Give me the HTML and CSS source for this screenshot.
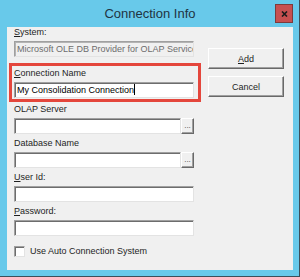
FILE: index.html
```html
<!DOCTYPE html>
<html lang="en">
<head>
    <meta charset="UTF-8">
    <meta name="viewport" content="width=device-width, initial-scale=1.0">
    <title>Connection Info</title>
    <link rel="stylesheet" href="styles.css">
</head>
<body>
    <div class="window">
        <div class="titlebar">
            <span class="title">Connection Info</span>
            <button class="close" title="Close">
                <svg width="7" height="6" viewBox="0 0 7 6">
                    <path d="M1 0.5 L6 5.5 M6 0.5 L1 5.5" stroke="#1a1a1a" stroke-width="1.6" fill="none"/>
                </svg>
            </button>
        </div>
        <div class="client">
            <div class="fields">
                <div class="field system">
                    <label><u>S</u>ystem:</label>
                    <div class="textbox disabled">Microsoft OLE DB Provider for OLAP Services</div>
                </div>
                <div class="field highlight">
                    <label><u>C</u>onnection Name</label>
                    <div class="textbox">My Consolidation Connection<span class="caret"></span></div>
                </div>
                <div class="field">
                    <label>OLAP Server</label>
                    <div class="browse-row">
                        <div class="textbox"></div>
                        <button class="browse">...</button>
                    </div>
                </div>
                <div class="field">
                    <label>Database Name</label>
                    <div class="browse-row">
                        <div class="textbox"></div>
                        <button class="browse">...</button>
                    </div>
                </div>
                <div class="field">
                    <label><u>U</u>ser Id:</label>
                    <div class="textbox"></div>
                </div>
                <div class="field">
                    <label><u>P</u>assword:</label>
                    <div class="textbox"></div>
                </div>
                <div class="check-row">
                    <span class="checkbox"></span>
                    <span>Use Auto Connection System</span>
                </div>
            </div>
            <div class="actions">
                <button class="btn"><u>A</u>dd</button>
                <button class="btn">Cancel</button>
            </div>
        </div>
    </div>
</body>
</html>
```

FILE: styles.css
```css
body {
    margin: 0;
    font-family: "Liberation Sans", Arial, sans-serif;
    font-size: 9px;
    color: #1e1e1e;
}

.window {
    width: 300px;
    height: 277px;
    box-sizing: border-box;
    background-color: #68c9ea;
    border-right: 1px solid #3c4e5a;
    border-bottom: 1px solid #3c4e5a;
    display: flex;
    flex-direction: column;
}

.titlebar {
    height: 27px;
    display: grid;
    grid-template-columns: 1fr auto 1fr;
    padding: 0 6px 0 7px;
}

.title {
    grid-column: 2;
    font-size: 13px;
    line-height: 27px;
    color: #1f3442;
}

.close {
    grid-column: 3;
    justify-self: end;
    align-self: start;
    margin-top: 4px;
    width: 18px;
    height: 19px;
    padding: 0;
    box-sizing: border-box;
    background-color: #c75050;
    border: 1px solid #7d3b3b;
    display: flex;
    align-items: center;
    justify-content: center;
}

.client {
    flex: 1;
    margin: 0 6px 6px 7px;
    padding: 0 9px 0 7px;
    background-color: #f0f0f0;
    display: flex;
}

.fields {
    width: 180px;
}

.field {
    margin-bottom: 4px;
}

.field label {
    display: block;
    line-height: 11px;
    margin-bottom: 3px;
}

.field.system {
    margin-bottom: 6px;
}

.field.highlight {
    border: 3px solid #e4463c;
    margin: 0 -7px 2px -5px;
    padding: 2px 4px 1px 2px;
}

.textbox {
    height: 16px;
    box-sizing: border-box;
    background-color: #fff;
    border: 1px solid;
    border-color: #a0a0a0 #e3e3e3 #e3e3e3 #a0a0a0;
    box-shadow: inset 1px 1px 0 #6d6d6d;
    padding: 0 2px;
    line-height: 14px;
    white-space: nowrap;
    overflow: hidden;
    color: #000;
}

.textbox.disabled {
    background-color: #f0f0f0;
    color: #6d6d6d;
    box-shadow: inset 1px 1px 0 #b4b4b4;
}

.caret {
    display: inline-block;
    width: 1px;
    height: 11px;
    background-color: #000;
    vertical-align: -2px;
}

.browse-row {
    display: flex;
}

.browse-row .textbox {
    flex: 1;
}

.browse {
    width: 13px;
    height: 16px;
    padding: 0;
    box-sizing: border-box;
    background-color: #f0f0f0;
    border: 1px solid;
    border-color: #fff #696969 #696969 #fff;
    box-shadow: inset -1px -1px 0 #a0a0a0;
    font-family: "Liberation Sans", Arial, sans-serif;
    font-size: 8px;
    line-height: 8px;
    color: #444;
    display: flex;
    align-items: flex-end;
    justify-content: center;
    padding-bottom: 3px;
}

.check-row {
    display: flex;
    align-items: center;
    gap: 5px;
    margin-top: 10px;
    line-height: 11px;
}

.checkbox {
    width: 11px;
    height: 11px;
    box-sizing: border-box;
    background-color: #fff;
    border: 1px solid;
    border-color: #a0a0a0 #e3e3e3 #e3e3e3 #a0a0a0;
    box-shadow: inset 1px 1px 0 #6d6d6d;
}

.actions {
    width: 76px;
    margin-left: 14px;
    padding-top: 21px;
    display: flex;
    flex-direction: column;
    gap: 7px;
}

.btn {
    height: 21px;
    padding: 0;
    box-sizing: border-box;
    background-color: #f0f0f0;
    border: 1px solid;
    border-color: #fff #696969 #696969 #fff;
    box-shadow: inset -1px -1px 0 #a0a0a0, 0 0 0 0 transparent;
    font-family: "Liberation Sans", Arial, sans-serif;
    font-size: 9px;
    color: #1e1e1e;
}
```
